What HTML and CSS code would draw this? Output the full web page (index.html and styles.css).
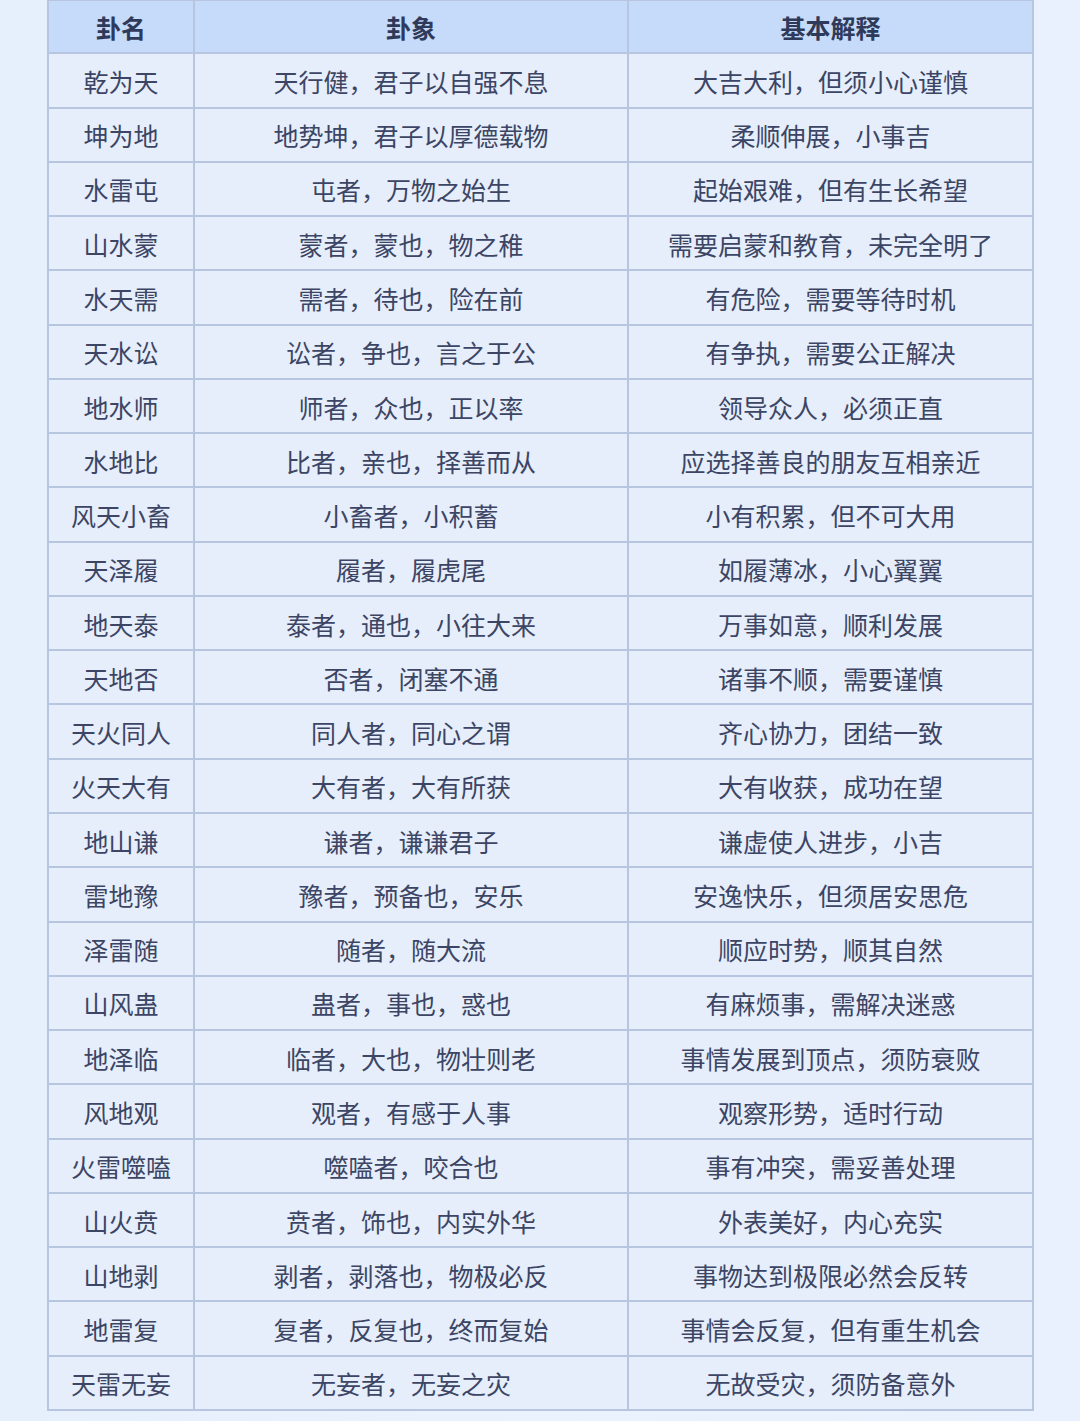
FILE: index.html
```html
<!DOCTYPE html>
<html lang="zh">
<head>
<meta charset="utf-8">
<title>卦象表</title>
<link rel="stylesheet" href="styles.css">
</head>
<body>
<div class="table">
  <div class="cell head">卦名</div><div class="cell head">卦象</div><div class="cell head">基本解释</div>
  <div class="cell">乾为天</div><div class="cell">天行健，君子以自强不息</div><div class="cell">大吉大利，但须小心谨慎</div>
  <div class="cell">坤为地</div><div class="cell">地势坤，君子以厚德载物</div><div class="cell">柔顺伸展，小事吉</div>
  <div class="cell">水雷屯</div><div class="cell">屯者，万物之始生</div><div class="cell">起始艰难，但有生长希望</div>
  <div class="cell">山水蒙</div><div class="cell">蒙者，蒙也，物之稚</div><div class="cell">需要启蒙和教育，未完全明了</div>
  <div class="cell">水天需</div><div class="cell">需者，待也，险在前</div><div class="cell">有危险，需要等待时机</div>
  <div class="cell">天水讼</div><div class="cell">讼者，争也，言之于公</div><div class="cell">有争执，需要公正解决</div>
  <div class="cell">地水师</div><div class="cell">师者，众也，正以率</div><div class="cell">领导众人，必须正直</div>
  <div class="cell">水地比</div><div class="cell">比者，亲也，择善而从</div><div class="cell">应选择善良的朋友互相亲近</div>
  <div class="cell">风天小畜</div><div class="cell">小畜者，小积蓄</div><div class="cell">小有积累，但不可大用</div>
  <div class="cell">天泽履</div><div class="cell">履者，履虎尾</div><div class="cell">如履薄冰，小心翼翼</div>
  <div class="cell">地天泰</div><div class="cell">泰者，通也，小往大来</div><div class="cell">万事如意，顺利发展</div>
  <div class="cell">天地否</div><div class="cell">否者，闭塞不通</div><div class="cell">诸事不顺，需要谨慎</div>
  <div class="cell">天火同人</div><div class="cell">同人者，同心之谓</div><div class="cell">齐心协力，团结一致</div>
  <div class="cell">火天大有</div><div class="cell">大有者，大有所获</div><div class="cell">大有收获，成功在望</div>
  <div class="cell">地山谦</div><div class="cell">谦者，谦谦君子</div><div class="cell">谦虚使人进步，小吉</div>
  <div class="cell">雷地豫</div><div class="cell">豫者，预备也，安乐</div><div class="cell">安逸快乐，但须居安思危</div>
  <div class="cell">泽雷随</div><div class="cell">随者，随大流</div><div class="cell">顺应时势，顺其自然</div>
  <div class="cell">山风蛊</div><div class="cell">蛊者，事也，惑也</div><div class="cell">有麻烦事，需解决迷惑</div>
  <div class="cell">地泽临</div><div class="cell">临者，大也，物壮则老</div><div class="cell">事情发展到顶点，须防衰败</div>
  <div class="cell">风地观</div><div class="cell">观者，有感于人事</div><div class="cell">观察形势，适时行动</div>
  <div class="cell">火雷噬嗑</div><div class="cell">噬嗑者，咬合也</div><div class="cell">事有冲突，需妥善处理</div>
  <div class="cell">山火贲</div><div class="cell">贲者，饰也，内实外华</div><div class="cell">外表美好，内心充实</div>
  <div class="cell">山地剥</div><div class="cell">剥者，剥落也，物极必反</div><div class="cell">事物达到极限必然会反转</div>
  <div class="cell">地雷复</div><div class="cell">复者，反复也，终而复始</div><div class="cell">事情会反复，但有重生机会</div>
  <div class="cell">天雷无妄</div><div class="cell">无妄者，无妄之灾</div><div class="cell">无故受灾，须防备意外</div>
</div>
</body>
</html>
```

FILE: styles.css
```css
html, body {
  margin: 0;
  padding: 0;
}
body {
  background: linear-gradient(90deg, #e6effc 0%, #eaf2fe 50%, #e8f1fd 100%);
  width: 1080px;
  height: 1421px;
  overflow: hidden;
  font-family: "Noto Sans CJK SC", "Noto Sans", sans-serif;
}
.table {
  margin-left: 47px;
  margin-top: -1px;
  width: 987px;
  box-sizing: border-box;
  border: 2px solid #b8c5e0;
  background: #b8c5e0;
  display: grid;
  grid-template-columns: 144px 432px 403px;
  grid-template-rows: 51.3px repeat(25, 52.27px);
  gap: 2px;
}
.cell {
  background: #e6eefb;
  color: #3c4564;
  font-size: 25px;
  display: flex;
  align-items: center;
  justify-content: center;
  white-space: nowrap;
  line-height: 1;
  padding-top: 2px;
  box-sizing: border-box;
}
.head {
  background: #c6dbf9;
  font-weight: 700;
  color: #2f3a5a;
}
```
